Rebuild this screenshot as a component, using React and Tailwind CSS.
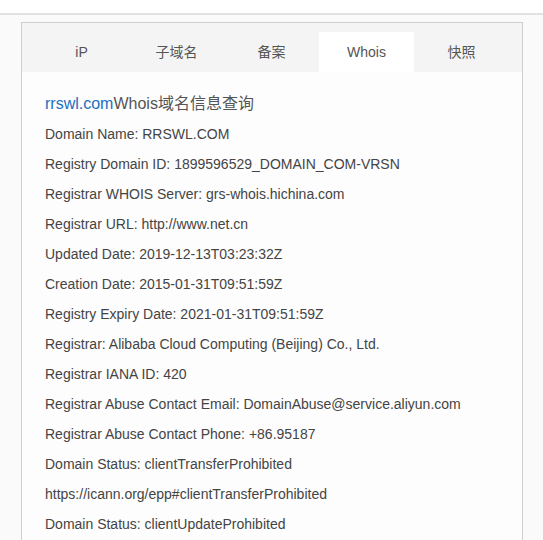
import React from 'react';

const TABS = ['iP', '子域名', '备案', 'Whois', '快照'];

const LINES = [
  'Domain Name: RRSWL.COM',
  'Registry Domain ID: 1899596529_DOMAIN_COM-VRSN',
  'Registrar WHOIS Server: grs-whois.hichina.com',
  'Registrar URL: http://www.net.cn',
  'Updated Date: 2019-12-13T03:23:32Z',
  'Creation Date: 2015-01-31T09:51:59Z',
  'Registry Expiry Date: 2021-01-31T09:51:59Z',
  'Registrar: Alibaba Cloud Computing (Beijing) Co., Ltd.',
  'Registrar IANA ID: 420',
  'Registrar Abuse Contact Email: DomainAbuse@service.aliyun.com',
  'Registrar Abuse Contact Phone: +86.95187',
  'Domain Status: clientTransferProhibited',
  'https://icann.org/epp#clientTransferProhibited',
  'Domain Status: clientUpdateProhibited',
];

export default function App() {
  return (
    <div className="h-[540px] bg-[#fafafa] font-['Liberation_Sans','Noto_Sans_CJK_SC',sans-serif] text-[#555] overflow-hidden">
      {/* 顶部条 */}
      <div className="h-[15px] bg-white border-b-2 border-[#e2e2e2]" />

      <div className="pl-[21px] pt-[7px]">
        <div className="w-[502px] border border-[#cfcfcf] bg-[#fdfdfd]">
          {/* Tabs */}
          <div className="flex bg-[#f4f4f4] pt-[9px] pl-[12px]">
            {TABS.map(tab => (
              <div
                key={tab}
                className={`w-[95px] h-[40px] flex items-center justify-center text-[14px] ${tab === 'Whois' ? 'bg-white' : ''}`}
              >
                {tab}
              </div>
            ))}
          </div>

          {/* Whois 内容 */}
          <div className="px-[23px] pt-[17px] pb-4">
            <div className="text-[16px] leading-[30px]">
              <span className="text-[#1b6fc2]">rrswl.com</span>Whois域名信息查询
            </div>
            {LINES.map((line, i) => (
              <div key={i} className="text-[14px] leading-[30px] text-[#444]">
                {line}
              </div>
            ))}
          </div>
        </div>
      </div>
    </div>
  );
}
